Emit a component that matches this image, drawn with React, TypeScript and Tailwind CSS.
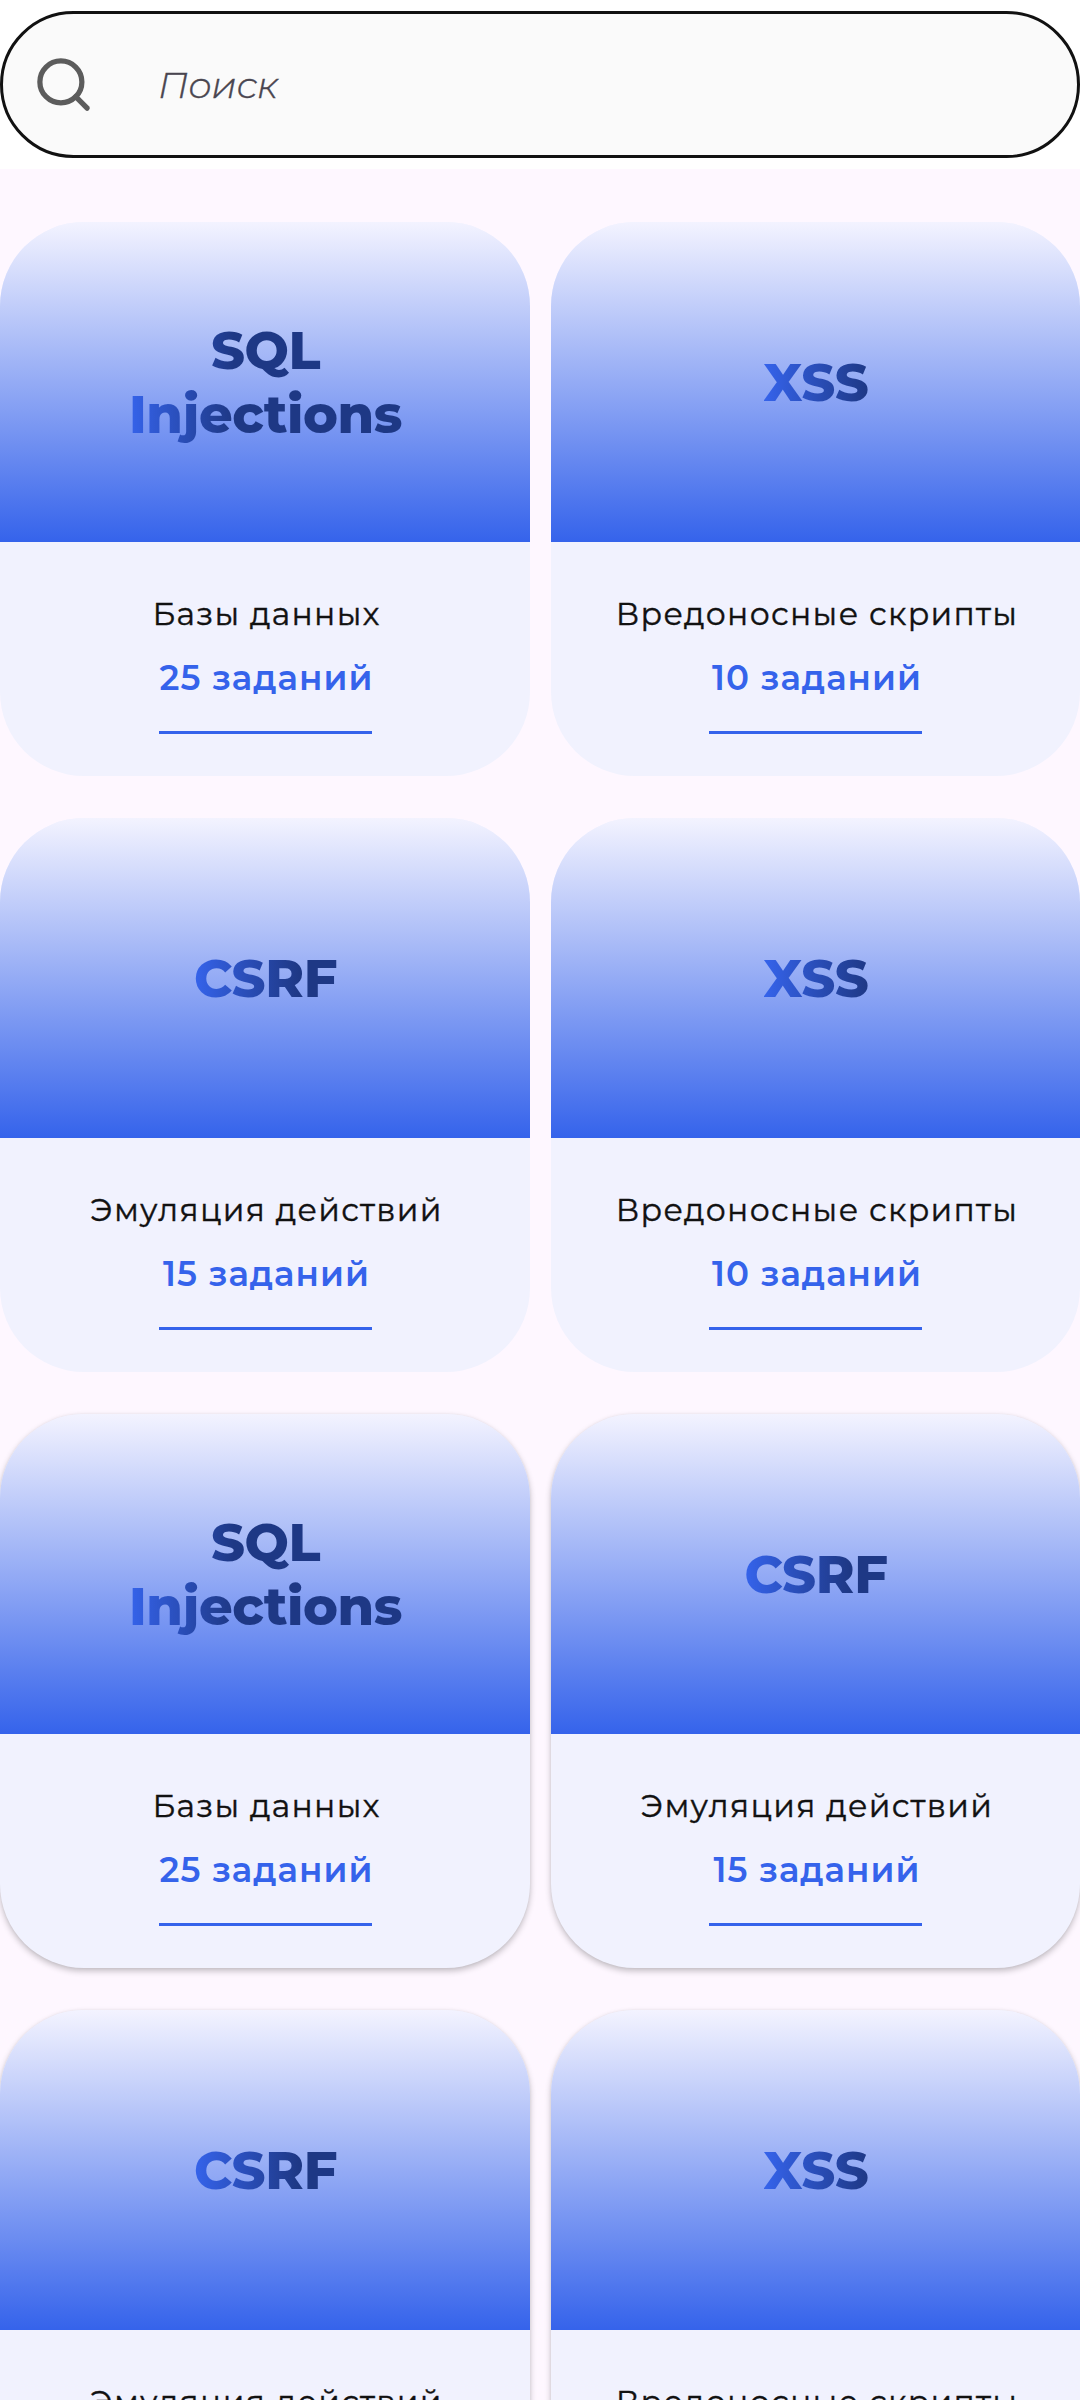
type Topic = { title: string; subtitle: string; count: number };

const SQL: Topic = { title: 'SQL Injections', subtitle: 'Базы данных', count: 25 };
const XSS: Topic = { title: 'XSS', subtitle: 'Вредоносные скрипты', count: 10 };
const CSRF: Topic = { title: 'CSRF', subtitle: 'Эмуляция действий', count: 15 };

const topics: { topic: Topic; raised: boolean }[] = [
  { topic: SQL, raised: false },
  { topic: XSS, raised: false },
  { topic: CSRF, raised: false },
  { topic: XSS, raised: false },
  { topic: SQL, raised: true },
  { topic: CSRF, raised: true },
  { topic: CSRF, raised: true },
  { topic: XSS, raised: true },
];

function SearchBar() {
  return (
    <header className="h-[169px] bg-white pt-[11px]">
      <label className="flex h-[147px] items-center rounded-full border-[3px] border-[#111111] bg-[#fafafa] pl-[29px]">
        <svg
          className="size-[63px] shrink-0"
          viewBox="0 0 24 24"
          fill="none"
          stroke="#5c5c5c"
          strokeWidth="2"
          strokeLinecap="round"
          strokeLinejoin="round"
        >
          <circle cx="11" cy="11" r="8" />
          <path d="M21 21l-4.35-4.35" />
        </svg>
        <span className="ml-[63px] text-[36.75px] leading-[45px] font-light tracking-[-0.2px] text-[#49454f] italic [-webkit-text-stroke:0.4px_#49454f]">
          Поиск
        </span>
      </label>
    </header>
  );
}

function TopicCard({ topic, raised }: { topic: Topic; raised: boolean }) {
  return (
    <article
      className={`h-[554px] overflow-hidden rounded-[84px] bg-[#f1f2fe] text-center ${
        raised ? 'shadow-[0_3px_6px_rgba(0,0,0,0.24),0_0_3px_rgba(0,0,0,0.05)]' : ''
      }`}
    >
      <div className="flex h-[320px] items-center justify-center bg-linear-to-b/srgb from-[#f3f3ff] to-[#3563eb] pl-px">
        <h2 className="w-min bg-linear-to-r/srgb from-[#3563eb] to-[#1e3885] to-[105px] bg-clip-text text-[52.5px] leading-[64px] font-extrabold tracking-[-0.4px] text-transparent">
          {topic.title}
        </h2>
      </div>
      <div className="flex flex-col items-center pt-[41px]">
        <p className="pl-[3px] text-[31.5px] leading-[63px] tracking-[1.31px] whitespace-nowrap text-[#111111] [-webkit-text-stroke:0.4px_#111111]">
          {topic.subtitle}
        </p>
        <p className="pl-[3px] text-[34.125px] leading-[64px] font-semibold tracking-[1.05px] whitespace-nowrap text-[#3563eb]">
          {topic.count} заданий
        </p>
        <div className="mt-[21px] h-[2.6px] w-[213px] bg-[#3563eb]" />
      </div>
    </article>
  );
}

export default function App() {
  return (
    <div className="h-[2400px] w-[1080px] overflow-hidden bg-[#fef7ff] font-[Montserrat,Inter,sans-serif]">
      <SearchBar />
      <main className="grid grid-cols-[530px_529px] gap-x-[21px] gap-y-[42px] pt-[53px]">
        {topics.map(({ topic, raised }, i) => (
          <TopicCard key={i} topic={topic} raised={raised} />
        ))}
      </main>
    </div>
  );
}
